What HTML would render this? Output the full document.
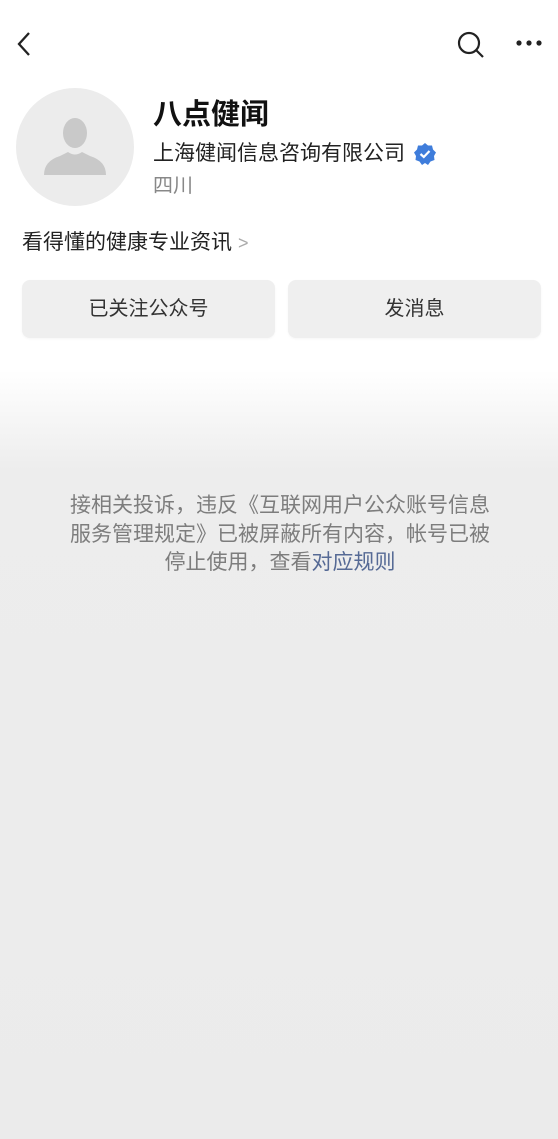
<!DOCTYPE html>
<html><head><meta charset="utf-8"><style>
body{margin:0;width:558px;height:1139px;overflow:hidden;font-family:"Liberation Sans","Noto Sans CJK SC",sans-serif;background:linear-gradient(#fff 0,#fff 370px,#ededed 470px,#ebebeb 1139px);position:relative}
.a{position:absolute}
.btn{position:absolute;top:280px;height:58px;width:253px;background:#efefef;border-radius:8px;text-align:center;line-height:58px;font-size:20px;color:#333;box-shadow:0 1px 2px rgba(0,0,0,.04)}
</style></head><body>
<svg class="a" style="left:14px;top:30px" width="20" height="28" viewBox="0 0 20 28"><path d="M15 3 L5 14 L15 25" fill="none" stroke="#222" stroke-width="2.3"/></svg>
<svg class="a" style="left:456px;top:30px" width="30" height="30" viewBox="0 0 30 30"><circle cx="13" cy="13" r="10" fill="none" stroke="#222" stroke-width="2.2"/><path d="M20.5 20.5 L27 27" stroke="#222" stroke-width="2.2"/></svg>
<svg class="a" style="left:514px;top:38px" width="32" height="10"><circle cx="5" cy="5" r="2.6" fill="#222"/><circle cx="15" cy="5" r="2.6" fill="#222"/><circle cx="25" cy="5" r="2.6" fill="#222"/></svg>
<div class="a" style="left:16px;top:88px;width:118px;height:118px;border-radius:50%;background:#ececec"></div>
<svg class="a" style="left:40px;top:115px" width="70" height="62" viewBox="0 0 70 62"><ellipse cx="35" cy="18" rx="12" ry="15" fill="#c9c9c9"/><path d="M4 60 Q4 46 20 41 L28 37 Q35 42 42 37 L50 41 Q66 46 66 60 Z" fill="#c9c9c9"/></svg>
<div class="a" style="left:153px;top:96px;font-size:29px;font-weight:bold;color:#111;line-height:38px">八点健闻</div>
<div class="a" style="left:153px;top:140px;font-size:21px;color:#222;line-height:28px">上海健闻信息咨询有限公司</div>
<svg class="a" style="left:413px;top:142px" width="24" height="24" viewBox="0 0 24 24"><path d="M12 1 L15 3.5 L19 3.5 L20 7.5 L23 10.5 L21 14 L21.5 18 L17.5 19.5 L15 23 L12 21 L9 23 L6.5 19.5 L2.5 18 L3 14 L1 10.5 L4 7.5 L5 3.5 L9 3.5 Z" fill="#3f7ddb"/><path d="M7.5 12 L10.8 15 L16.5 9" fill="none" stroke="#fff" stroke-width="2.2"/></svg>
<div class="a" style="left:153px;top:172px;font-size:20px;color:#888;line-height:28px">四川</div>
<div class="a" style="left:22px;top:229px;font-size:21px;color:#222;line-height:28px">看得懂的健康专业资讯<span style="color:#aaa;font-size:18px;margin-left:6px">&gt;</span></div>
<div class="btn" style="left:22px">已关注公众号</div>
<div class="btn" style="left:288px">发消息</div>
<div class="a" style="left:60px;top:492px;width:440px;text-align:center;font-size:21px;color:#7d7d7d;line-height:28.5px">接相关投诉，违反《互联网用户公众账号信息<br>服务管理规定》已被屏蔽所有内容，帐号已被<br>停止使用，查看<span style="color:#566a95">对应规则</span></div>
</body></html>
